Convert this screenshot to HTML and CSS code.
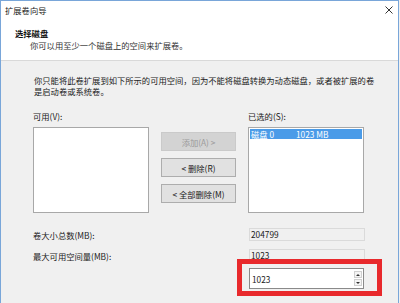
FILE: index.html
```html
<!DOCTYPE html>
<html lang="zh-CN">
<head>
    <meta charset="UTF-8" />
    <meta name="viewport" content="width=device-width, initial-scale=1.0" />
    <title>扩展卷向导</title>
    <link rel="stylesheet" href="styles.css">
</head>
<body>
    <div class="window">
        <div class="titlebar">
            <span>扩展卷向导</span>
            <svg class="close" width="8" height="8" viewBox="0 0 8 8">
                <path d="M0.5 0.5 L7.5 7.5 M7.5 0.5 L0.5 7.5" stroke="#333" stroke-width="1" fill="none" />
            </svg>
        </div>
        <div class="header">
            <div class="heading">选择磁盘</div>
            <div class="subheading">你可以用至少一个磁盘上的空间来扩展卷。</div>
        </div>
        <div class="content">
            <p class="note">你只能将此卷扩展到如下所示的可用空间，因为不能将磁盘转换为动态磁盘，或者被扩展的卷<br>是启动卷或系统卷。</p>
            <div class="picker">
                <div class="column">
                    <div class="label">可用(V):</div>
                    <div class="listbox"></div>
                </div>
                <div class="actions">
                    <button class="btn" disabled>添加(A) &gt;</button>
                    <button class="btn">&lt; 删除(R)</button>
                    <button class="btn">&lt; 全部删除(M)</button>
                </div>
                <div class="column">
                    <div class="label">已选的(S):</div>
                    <div class="listbox">
                        <div class="item selected">
                            <span class="disk">磁盘 0</span>
                            <span>1023 MB</span>
                        </div>
                    </div>
                </div>
            </div>
            <div class="sizes">
                <div class="size-row">
                    <span>卷大小总数(MB):</span>
                    <div class="readonly">204799</div>
                </div>
                <div class="size-row">
                    <span>最大可用空间量(MB):</span>
                    <div class="readonly">1023</div>
                </div>
                <div class="highlight">
                    <div class="spin">
                        <span>1023</span>
                        <div class="spin-buttons">
                            <div class="spin-btn"><span class="arrow-up"></span></div>
                            <div class="spin-btn"><span class="arrow-down"></span></div>
                        </div>
                    </div>
                </div>
            </div>
        </div>
    </div>
</body>
</html>
```

FILE: styles.css
```css
body {
    margin: 0;
    font-family: "Noto Sans CJK SC", "Liberation Sans", sans-serif;
    font-size: 8.3px;
    color: #1a1a1a;
    background-color: #f0f0f0;
}

.window {
    width: 399px;
    height: 303px;
    box-sizing: border-box;
    border: 1px solid #79a6d9;
    border-bottom: none;
    background-color: #f0f0f0;
    overflow: hidden;
}

.titlebar {
    height: 20px;
    box-sizing: border-box;
    padding: 3px 5px 0 4px;
    display: flex;
    justify-content: space-between;
    align-items: flex-start;
    background-color: #fff;
    line-height: 12px;
    color: #222;
}

.close {
    margin-top: 2px;
}

.header {
    background-color: #fff;
    padding: 6px 0 9px 14px;
    border-bottom: 1px solid #d9d9d9;
    line-height: 12px;
}

.heading {
    font-weight: bold;
    color: #111;
}

.subheading {
    padding-left: 15px;
    color: #333;
}

.content {
    padding: 14px 0 0 32px;
}

.note {
    margin: 0 0 0 1px;
    line-height: 10.5px;
    white-space: nowrap;
    color: #222;
}

.picker {
    margin-top: 14px;
    display: flex;
    gap: 12px;
}

.picker .column + .column {
    margin-left: 1px;
}

.label {
    line-height: 12px;
}

.listbox {
    width: 116px;
    height: 86px;
    margin-top: 5px;
    box-sizing: border-box;
    border: 1px solid #a8a8a8;
    background-color: #fff;
    padding: 1px;
}

.item {
    height: 10px;
    line-height: 10px;
    display: flex;
    padding-left: 1px;
}

.item.selected {
    background-color: #4a9be8;
    color: #fff;
}

.disk {
    width: 45px;
}

.actions {
    width: 75px;
    padding-top: 22px;
    display: flex;
    flex-direction: column;
    gap: 7px;
}

.btn {
    height: 19px;
    padding: 0;
    font-family: inherit;
    font-size: 8.3px;
    color: #1a1a1a;
    background-color: #e1e1e1;
    border: 1px solid #adadad;
}

.btn:disabled {
    background-color: #d3d3d3;
    border-color: #cacaca;
    color: #9a9a9a;
}

.sizes {
    margin-top: 15px;
    display: flex;
    flex-direction: column;
    gap: 8px;
}

.size-row {
    height: 13px;
    display: grid;
    grid-template-columns: 216px 116px;
    align-items: center;
    line-height: 12px;
}

.readonly {
    height: 13px;
    box-sizing: border-box;
    border: 1px solid #dadada;
    line-height: 11px;
    padding-left: 1px;
}

.highlight {
    width: 145px;
    height: 37px;
    box-sizing: border-box;
    margin: -11px 0 0 204px;
    border: 5px solid #e8292c;
    padding: 4px 0 0 7px;
}

.spin {
    width: 115px;
    height: 21px;
    box-sizing: border-box;
    border: 1px solid #8a8a8a;
    background-color: #fff;
    display: flex;
    justify-content: space-between;
    align-items: center;
    padding: 0 1px 0 2px;
}

.spin-buttons {
    display: flex;
    flex-direction: column;
    gap: 1px;
}

.spin-btn {
    width: 8px;
    height: 7px;
    box-sizing: border-box;
    border: 1px solid #cfcfcf;
    background-color: #f4f4f4;
    display: flex;
    align-items: center;
    justify-content: center;
}

.arrow-up {
    border-left: 2px solid transparent;
    border-right: 2px solid transparent;
    border-bottom: 2px solid #333;
}

.arrow-down {
    border-left: 2px solid transparent;
    border-right: 2px solid transparent;
    border-top: 2px solid #333;
}
```
